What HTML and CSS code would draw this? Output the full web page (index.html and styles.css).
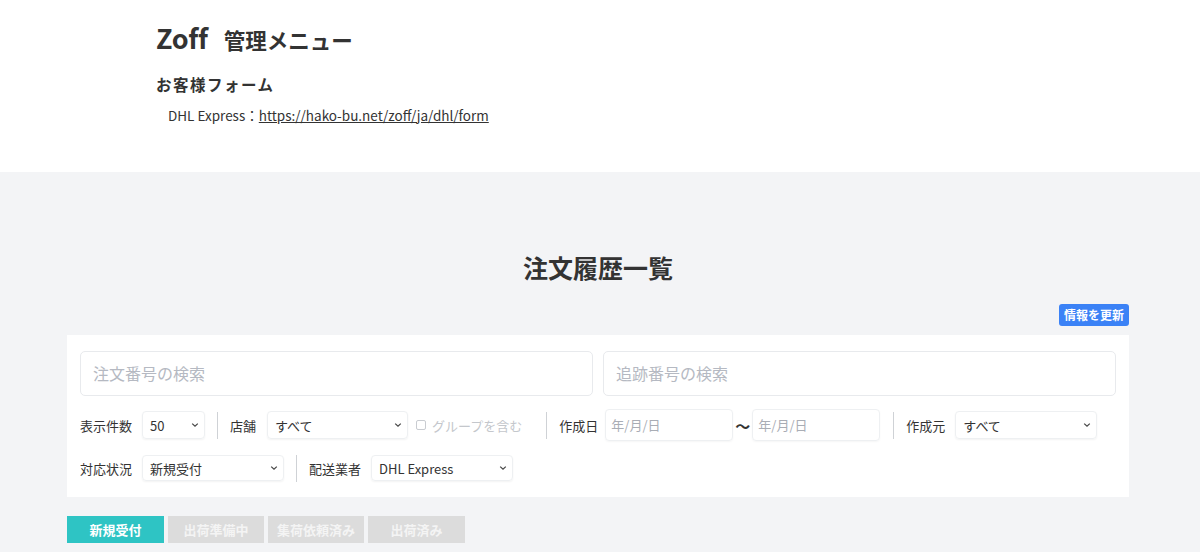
FILE: index.html
```html
<!DOCTYPE html>
<html lang="ja">
<head>
<meta charset="utf-8">
<title>Zoff 管理メニュー</title>
<link rel="stylesheet" href="styles.css">
</head>
<body>
<header class="top">
  <h1 class="brand"><span class="brand-name">Zoff</span><span class="brand-sub">管理メニュー</span></h1>
  <h2 class="form-title">お客様フォーム</h2>
  <p class="form-link">DHL Express：<a href="#">https://hako-bu.net/zoff/ja/dhl/form</a></p>
</header>
<main class="main">
  <h2 class="page-title">注文履歴一覧</h2>
  <div class="toolbar"><button class="refresh">情報を更新</button></div>
  <section class="card">
    <div class="search-row">
      <div class="search">注文番号の検索</div>
      <div class="search">追跡番号の検索</div>
    </div>
    <div class="filter-row row1">
      <span class="label">表示件数</span>
      <div class="select w-count"><span>50</span><svg class="chev" viewBox="0 0 10 6"><path d="M1.5 1.2 5 4.6 8.5 1.2"/></svg></div>
      <span class="divider"></span>
      <span class="label wide">店舗</span>
      <div class="select w-shop"><span>すべて</span><svg class="chev" viewBox="0 0 10 6"><path d="M1.5 1.2 5 4.6 8.5 1.2"/></svg></div>
      <span class="check"><span class="box"></span>グループを含む</span>
      <span class="divider"></span>
      <span class="label tight">作成日</span>
      <div class="date">年/月/日</div>
      <span class="tilde">〜</span>
      <div class="date">年/月/日</div>
      <span class="divider loose"></span>
      <span class="label">作成元</span>
      <div class="select w-wide"><span>すべて</span><svg class="chev" viewBox="0 0 10 6"><path d="M1.5 1.2 5 4.6 8.5 1.2"/></svg></div>
    </div>
    <div class="filter-row row2">
      <span class="label">対応状況</span>
      <div class="select w-wide"><span>新規受付</span><svg class="chev" viewBox="0 0 10 6"><path d="M1.5 1.2 5 4.6 8.5 1.2"/></svg></div>
      <span class="divider"></span>
      <span class="label">配送業者</span>
      <div class="select w-wide"><span>DHL Express</span><svg class="chev" viewBox="0 0 10 6"><path d="M1.5 1.2 5 4.6 8.5 1.2"/></svg></div>
    </div>
  </section>
  <nav class="tabs">
    <span class="tab active">新規受付</span>
    <span class="tab">出荷準備中</span>
    <span class="tab">集荷依頼済み</span>
    <span class="tab">出荷済み</span>
  </nav>
</main>
</body>
</html>
```
FILE: styles.css
```css
* { box-sizing: border-box; }
html, body { margin: 0; padding: 0; }
body {
  font-family: "Noto Sans CJK JP", "Noto Sans", sans-serif;
  color: #333;
  background: #f3f4f6;
  overflow: hidden;
}
.top {
  background: #fff;
  height: 172px;
  padding: 18px 0 0 156px;
}
.brand {
  margin: 0;
  height: 40px;
  line-height: 40px;
  font-weight: 700;
  display: flex;
  align-items: baseline;
}
.brand-name { font-size: 27px; letter-spacing: -0.3px; }
.brand-sub { font-size: 21.5px; margin-left: 16px; }
.form-title {
  margin: 16px 0 0;
  font-size: 15.5px;
  letter-spacing: 1.5px;
  line-height: 20px;
  font-weight: 700;
}
.form-link {
  margin: 11px 0 0 12px;
  font-size: 13.5px;
  line-height: 20px;
}
.form-link a { color: #333; text-decoration: underline; }
.main { padding: 0 71px 0 67px; }
.page-title {
  margin: 78px 0 0;
  text-align: center;
  font-size: 25px;
  line-height: 34px;
  font-weight: 700;
}
.toolbar {
  display: flex;
  justify-content: flex-end;
  margin-top: 20px;
}
.refresh {
  border: 0;
  background: #3b82f6;
  color: #fff;
  font-family: inherit;
  font-size: 12px;
  font-weight: 700;
  height: 22px;
  line-height: 22px;
  padding: 0 5px;
  border-radius: 3px;
}
.card {
  margin-top: 9px;
  background: #fff;
  padding: 16px 13px 15px;
}
.search-row { display: flex; gap: 10px; }
.search {
  flex: 1;
  height: 45px;
  border: 1px solid #e8eaed;
  border-radius: 5px;
  padding: 0 12px;
  font-size: 16px;
  line-height: 43px;
  color: #b5b9c2;
}
.filter-row {
  display: flex;
  align-items: center;
  font-size: 13px;
}
.row1 { margin-top: 13px; height: 32px; }
.row2 { margin-top: 13px; height: 28px; }
.label { margin-right: 10px; white-space: nowrap; }
.label.wide { margin-right: 11px; }
.label.tight { margin-right: 7px; }
.select {
  height: 28px;
  border: 1px solid #eef0f2;
  border-radius: 4px;
  box-shadow: 0 1px 2px rgba(0,0,0,0.05);
  display: flex;
  align-items: center;
  justify-content: space-between;
  padding: 0 5px 0 7px;
  font-size: 13px;
  flex: none;
}
.row2 .select { height: 26px; }
.chev { width: 8px; height: 6px; fill: none; stroke: #444; stroke-width: 1.5; }
.w-count { width: 63px; }
.w-shop { width: 141px; }
.w-wide { width: 142px; }
.divider {
  width: 1px;
  height: 27px;
  background: #cfd2d6;
  margin: 0 12px;
  flex: none;
}
.divider.loose { margin: 0 12px 0 13px; }
.check {
  display: flex;
  align-items: center;
  color: #c4c7cc;
  margin-left: 8px;
  margin-right: 12px;
  white-space: nowrap;
}
.box {
  width: 10px;
  height: 10px;
  border: 1px solid #c9ccd1;
  border-radius: 2px;
  margin-right: 6px;
}
.date {
  width: 128px;
  height: 32px;
  border: 1px solid #eef0f2;
  border-radius: 4px;
  box-shadow: 0 1px 2px rgba(0,0,0,0.04);
  padding: 0 5px;
  line-height: 30px;
  color: #a9adb5;
  flex: none;
}
.tilde {
  width: 19px;
  text-align: center;
  font-size: 15px;
  font-weight: 700;
}
.tabs {
  display: flex;
  gap: 4px;
  margin-top: 19px;
}
.tab {
  width: 97px;
  height: 27px;
  line-height: 27px;
  text-align: center;
  font-size: 13px;
  font-weight: 700;
  background: #dcdcdc;
  color: #f4f4f4;
}
.tab:nth-child(2) { width: 96px; }
.tab:nth-child(3) { width: 96px; }
.tab.active { background: #2ec4c4; color: #fff; }
```
